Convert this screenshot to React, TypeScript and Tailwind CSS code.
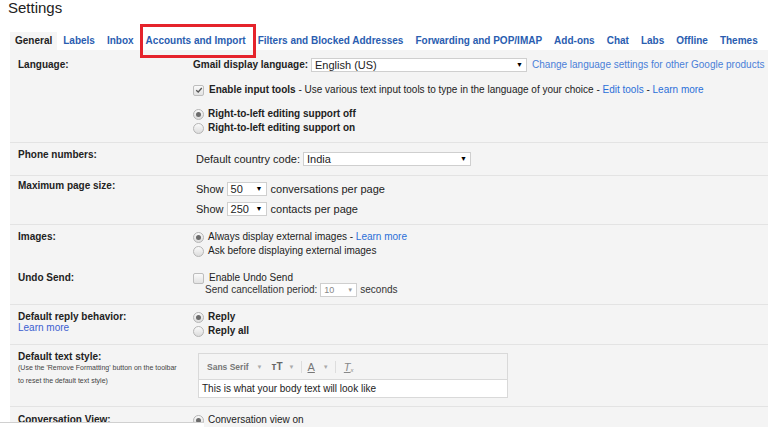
import React from 'react';

const tabs = ['Labels', 'Inbox', 'Accounts and Import', 'Filters and Blocked Addresses', 'Forwarding and POP/IMAP', 'Add-ons', 'Chat', 'Labs', 'Offline', 'Themes'];

function Radio({ on = false }: { on?: boolean }) {
  return (
    <span className="inline-flex items-center justify-center w-[11px] h-[11px] rounded-full border border-[#b5b5b5] bg-gradient-to-b from-[#fafafa] to-[#dcdcdc] mr-[4px] shrink-0">
      {on && <span className="w-[5px] h-[5px] rounded-full bg-[#6b6b6b]" />}
    </span>
  );
}

function Check({ on = false }: { on?: boolean }) {
  return (
    <span className="inline-flex items-center justify-center w-[11px] h-[11px] rounded-[2px] border border-[#bdbdbd] bg-gradient-to-b from-[#fafafa] to-[#e2e2e2] mr-[5px] shrink-0">
      {on && (
        <svg viewBox="0 0 10 10" className="w-[8px] h-[8px]">
          <path d="M1.5 5.2 L4 7.5 L8.5 2.5" fill="none" stroke="#555" strokeWidth="1.6" />
        </svg>
      )}
    </span>
  );
}

function Select({ value, width, small = false }: { value: string; width: string; small?: boolean }) {
  return (
    <span className={`inline-flex items-center justify-between bg-white border border-[#cfcfcf] px-[3px] h-[14px] ${width} ${small ? 'text-[9px] text-[#888]' : 'text-[11px] text-[#222]'}`}>
      <span className="font-normal">{value}</span>
      <span className={small ? 'text-[6px] text-[#999]' : 'text-[7px] text-black'}>▼</span>
    </span>
  );
}

function Row({ label, children, sep = true }: { label: React.ReactNode; children: React.ReactNode; sep?: boolean }) {
  return (
    <div className={`flex ${sep ? 'border-b border-[#e3e3e3]' : ''}`}>
      <div className="w-[183px] pl-[8px] shrink-0 font-bold">{label}</div>
      <div className="flex-1">{children}</div>
    </div>
  );
}

export default function App() {
  return (
    <div className="w-[768px] h-[427px] overflow-hidden bg-white text-[#222] relative whitespace-nowrap font-['Liberation_Sans',Arial,sans-serif] text-[10px] leading-[14px]">
      <div className="pl-[8px] text-[15px] leading-[16px] text-[#222]">Settings</div>

      <div className="flex items-stretch h-[18px] mt-[16px] ml-[10px] text-[10px] font-bold">
        <div className="bg-[#f5f5f5] px-[5px] flex items-center text-[#222]">General</div>
        {tabs.map((t) => (
          <div key={t} className={`flex items-center px-[6px] text-[#2a5db0] ${t === 'Accounts and Import' ? 'relative' : ''}`}>
            {t}
            {t === 'Accounts and Import' && (
              <span className="absolute left-0 right-[-4px] top-[-8px] bottom-[-8px] border-[3px] border-[#e5232b]" />
            )}
          </div>
        ))}
      </div>

      <div className="ml-[10px] bg-[#f4f4f4] h-[400px] pt-[1px]">
        <Row label={<div className="pt-[7px]">Language:</div>}>
          <div className="pt-[7px] pb-[7px]">
            <div className="flex items-center h-[14px]">
              <span className="font-bold mr-[3px]">Gmail display language:</span>
              <Select value="English (US)" width="w-[216px]" />
              <span className="ml-[5px] text-[#4a7fd8]">Change language settings for other Google products</span>
            </div>
            <div className="flex items-center mt-[11px]">
              <Check on />
              <span className="font-bold">Enable input tools</span>
              <span>&nbsp;- Use various text input tools to type in the language of your choice -&nbsp;</span>
              <span className="text-[#2a6fd8]">Edit tools</span>
              <span>&nbsp;-&nbsp;</span>
              <span className="text-[#2a6fd8]">Learn more</span>
            </div>
            <div className="flex items-center mt-[10px] font-bold">
              <Radio on />
              Right-to-left editing support off
            </div>
            <div className="flex items-center font-bold">
              <Radio />
              Right-to-left editing support on
            </div>
          </div>
        </Row>

        <Row label={<div className="pt-[5px]">Phone numbers:</div>}>
          <div className="pt-[9px] pb-[9px] pl-[3px] flex items-center text-[11px]">
            <span className="mr-[3px]">Default country code:</span>
            <Select value="India" width="w-[168px]" />
          </div>
        </Row>

        <Row label={<div className="pt-[3px]">Maximum page size:</div>}>
          <div className="pt-[6px] pb-[8px] pl-[3px] text-[11px]">
            <div className="flex items-center">
              <span className="mr-[3px]">Show</span>
              <Select value="50" width="w-[40px]" />
              <span className="ml-[4px]">conversations per page</span>
            </div>
            <div className="flex items-center mt-[6px]">
              <span className="mr-[3px]">Show</span>
              <Select value="250" width="w-[40px]" />
              <span className="ml-[4px]">contacts per page</span>
            </div>
          </div>
        </Row>

        <Row label={
          <div>
            <div className="pt-[5px]">Images:</div>
            <div className="pt-[27px]">Undo Send:</div>
          </div>
        }>
          <div className="pt-[5px] pb-[7px]">
            <div className="flex items-center">
              <Radio on />
              Always display external images -&nbsp;<span className="text-[#2a6fd8]">Learn more</span>
            </div>
            <div className="flex items-center">
              <Radio />
              Ask before displaying external images
            </div>
            <div className="flex items-center mt-[13px]">
              <Check />
              Enable Undo Send
            </div>
            <div className="flex items-center pl-[12px] text-[10px] text-[#333] mt-[-2px]">
              <span className="mr-[3px]">Send cancellation period:</span>
              <Select value="10" width="w-[37px]" small />
              <span className="ml-[3px]">seconds</span>
            </div>
          </div>
        </Row>

        <Row label={
          <div className="pt-[5px]">
            <div>Default reply behavior:</div>
            <div className="font-normal text-[#3b5ed0] mt-[-3px]">Learn more</div>
          </div>
        }>
          <div className="pt-[5px] pb-[6px] font-bold">
            <div className="flex items-center"><Radio on />Reply</div>
            <div className="flex items-center"><Radio />Reply all</div>
          </div>
        </Row>

        <Row label={
          <div className="pt-[5px]">
            <div>Default text style:</div>
            <div className="font-normal text-[7px] leading-[13px] text-[#444] mt-[-3px]">(Use the 'Remove Formatting' button on the toolbar<br />to reset the default text style)</div>
          </div>
        }>
          <div className="pt-[8px] pb-[8px] pl-[5px]">
            <div className="w-[310px] border border-[#d9d9d9]">
              <div className="h-[25px] flex items-center pl-[8px] text-[#777] text-[8.5px] font-bold gap-[6px]">
                <span>Sans Serif</span>
                <span className="text-[6px] text-[#aaa] ml-[2px]">▼</span>
                <span className="ml-[3px] text-[10px] text-[#666]">тT</span>
                <span className="text-[6px] text-[#aaa]">▼</span>
                <span className="w-px h-[12px] bg-[#ddd]" />
                <span className="text-[11px] text-[#777] underline font-normal">A</span>
                <span className="text-[6px] text-[#aaa] ml-[2px]">▼</span>
                <span className="w-px h-[12px] bg-[#ddd]" />
                <span className="text-[11px] text-[#888] italic underline font-normal ml-[2px]">T<sub className="text-[6px]">x</sub></span>
              </div>
              <div className="bg-white border-t border-[#d9d9d9] h-[18px] pl-[3px] flex items-center">This is what your body text will look like</div>
            </div>
          </div>
        </Row>

        <Row label={<div className="pt-[6px]">Conversation View:</div>} sep={false}>
          <div className="pt-[6px] flex items-center"><Radio on />Conversation view on</div>
        </Row>
      </div>

      <div className="absolute left-0 bottom-0 w-[204px] h-[5px] bg-white border-t border-[#d0d0d0]" />
    </div>
  );
}
